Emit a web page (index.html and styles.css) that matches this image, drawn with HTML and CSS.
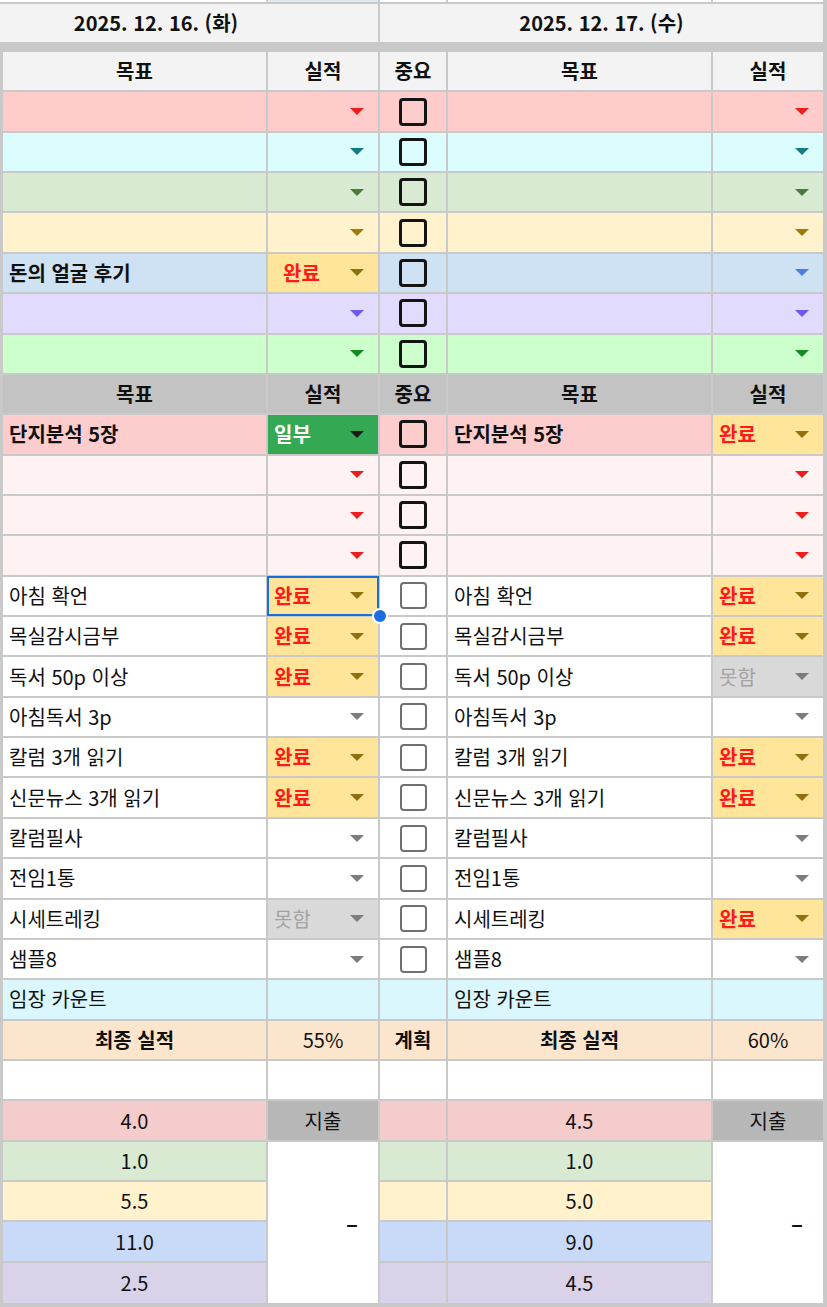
FILE: index.html
```html
<!DOCTYPE html>
<html lang="ko">
<head>
<meta charset="utf-8">
<title>Daily goals</title>
<link rel="stylesheet" href="styles.css">
</head>
<body>
<div class="sheet">
  <!-- partial top row -->
  <div class="c edge bg-w"></div><div class="c bg-topb"></div><div class="c bg-w"></div><div class="c bg-w"></div><div class="c bg-w"></div>
  <!-- dates -->
  <div class="c edge ctr b bg-h s2 date1">2025. 12. 16. (화)</div>
  <div class="c ctr b bg-h s3">2025. 12. 17. (수)</div>
  <div class="spacer"></div>

  <!-- header -->
  <div class="c ctr b bg-h">목표</div><div class="c ctr b bg-h">실적</div><div class="c ctr b bg-h">중요</div><div class="c ctr b bg-h">목표</div><div class="c ctr b bg-h">실적</div>

  <div class="c bg-1"></div><div class="c dd bg-1"><i class="arr a-red"></i></div><div class="c ctr bg-1"><span class="box"></span></div><div class="c bg-1"></div><div class="c dd bg-1"><i class="arr a-red"></i></div>
  <div class="c bg-2"></div><div class="c dd bg-2"><i class="arr a-teal"></i></div><div class="c ctr bg-2"><span class="box"></span></div><div class="c bg-2"></div><div class="c dd bg-2"><i class="arr a-teal"></i></div>
  <div class="c bg-3"></div><div class="c dd bg-3"><i class="arr a-dgreen"></i></div><div class="c ctr bg-3"><span class="box"></span></div><div class="c bg-3"></div><div class="c dd bg-3"><i class="arr a-dgreen"></i></div>
  <div class="c bg-4"></div><div class="c dd bg-4"><i class="arr a-gold"></i></div><div class="c ctr bg-4"><span class="box"></span></div><div class="c bg-4"></div><div class="c dd bg-4"><i class="arr a-gold"></i></div>
  <div class="c b bg-5">돈의 얼굴 후기</div><div class="c dd st-done wide"><span>완료</span><i class="arr a-brown"></i></div><div class="c ctr bg-5"><span class="box"></span></div><div class="c bg-5"></div><div class="c dd bg-5"><i class="arr a-blue"></i></div>
  <div class="c bg-6"></div><div class="c dd bg-6"><i class="arr a-purple"></i></div><div class="c ctr bg-6"><span class="box"></span></div><div class="c bg-6"></div><div class="c dd bg-6"><i class="arr a-purple"></i></div>
  <div class="c bg-7"></div><div class="c dd bg-7"><i class="arr a-green"></i></div><div class="c ctr bg-7"><span class="box"></span></div><div class="c bg-7"></div><div class="c dd bg-7"><i class="arr a-green"></i></div>

  <!-- header 2 -->
  <div class="c ctr b bg-h2">목표</div><div class="c ctr b bg-h2">실적</div><div class="c ctr b bg-h2">중요</div><div class="c ctr b bg-h2">목표</div><div class="c ctr b bg-h2">실적</div>

  <div class="c b bg-p">단지분석 5장</div><div class="c dd st-part"><span>일부</span><i class="arr a-black"></i></div><div class="c ctr bg-p"><span class="box"></span></div><div class="c b bg-p">단지분석 5장</div><div class="c dd st-done"><span>완료</span><i class="arr a-brown"></i></div>
  <div class="c bg-lp"></div><div class="c dd bg-lp"><i class="arr a-red"></i></div><div class="c ctr bg-lp"><span class="box"></span></div><div class="c bg-lp"></div><div class="c dd bg-lp"><i class="arr a-red"></i></div>
  <div class="c bg-lp"></div><div class="c dd bg-lp"><i class="arr a-red"></i></div><div class="c ctr bg-lp"><span class="box"></span></div><div class="c bg-lp"></div><div class="c dd bg-lp"><i class="arr a-red"></i></div>
  <div class="c bg-lp"></div><div class="c dd bg-lp"><i class="arr a-red"></i></div><div class="c ctr bg-lp"><span class="box"></span></div><div class="c bg-lp"></div><div class="c dd bg-lp"><i class="arr a-red"></i></div>

  <div class="c bg-w">아침 확언</div><div class="c dd st-done sel"><span>완료</span><i class="arr a-brown"></i><span class="handle"></span></div><div class="c ctr bg-w"><span class="box g"></span></div><div class="c bg-w">아침 확언</div><div class="c dd st-done"><span>완료</span><i class="arr a-brown"></i></div>
  <div class="c bg-w">목실감시금부</div><div class="c dd st-done"><span>완료</span><i class="arr a-brown"></i></div><div class="c ctr bg-w"><span class="box g"></span></div><div class="c bg-w">목실감시금부</div><div class="c dd st-done"><span>완료</span><i class="arr a-brown"></i></div>
  <div class="c bg-w">독서 50p 이상</div><div class="c dd st-done"><span>완료</span><i class="arr a-brown"></i></div><div class="c ctr bg-w"><span class="box g"></span></div><div class="c bg-w">독서 50p 이상</div><div class="c dd st-no"><span>못함</span><i class="arr a-gray"></i></div>
  <div class="c bg-w">아침독서 3p</div><div class="c dd bg-w"><i class="arr a-gray"></i></div><div class="c ctr bg-w"><span class="box g"></span></div><div class="c bg-w">아침독서 3p</div><div class="c dd bg-w"><i class="arr a-gray"></i></div>
  <div class="c bg-w">칼럼 3개 읽기</div><div class="c dd st-done"><span>완료</span><i class="arr a-brown"></i></div><div class="c ctr bg-w"><span class="box g"></span></div><div class="c bg-w">칼럼 3개 읽기</div><div class="c dd st-done"><span>완료</span><i class="arr a-brown"></i></div>
  <div class="c bg-w">신문뉴스 3개 읽기</div><div class="c dd st-done"><span>완료</span><i class="arr a-brown"></i></div><div class="c ctr bg-w"><span class="box g"></span></div><div class="c bg-w">신문뉴스 3개 읽기</div><div class="c dd st-done"><span>완료</span><i class="arr a-brown"></i></div>
  <div class="c bg-w">칼럼필사</div><div class="c dd bg-w"><i class="arr a-gray"></i></div><div class="c ctr bg-w"><span class="box g"></span></div><div class="c bg-w">칼럼필사</div><div class="c dd bg-w"><i class="arr a-gray"></i></div>
  <div class="c bg-w">전임1통</div><div class="c dd bg-w"><i class="arr a-gray"></i></div><div class="c ctr bg-w"><span class="box g"></span></div><div class="c bg-w">전임1통</div><div class="c dd bg-w"><i class="arr a-gray"></i></div>
  <div class="c bg-w">시세트레킹</div><div class="c dd st-no"><span>못함</span><i class="arr a-gray"></i></div><div class="c ctr bg-w"><span class="box g"></span></div><div class="c bg-w">시세트레킹</div><div class="c dd st-done"><span>완료</span><i class="arr a-brown"></i></div>
  <div class="c bg-w">샘플8</div><div class="c dd bg-w"><i class="arr a-gray"></i></div><div class="c ctr bg-w"><span class="box g"></span></div><div class="c bg-w">샘플8</div><div class="c dd bg-w"><i class="arr a-gray"></i></div>

  <div class="c bg-cy">임장 카운트</div><div class="c bg-cy"></div><div class="c bg-cy"></div><div class="c bg-cy">임장 카운트</div><div class="c bg-cy"></div>
  <div class="c ctr b bg-pe">최종 실적</div><div class="c ctr bg-pe">55%</div><div class="c ctr b bg-pe">계획</div><div class="c ctr b bg-pe">최종 실적</div><div class="c ctr bg-pe">60%</div>
  <div class="c bg-w"></div><div class="c bg-w"></div><div class="c bg-w"></div><div class="c bg-w"></div><div class="c bg-w"></div>

  <div class="c ctr bg-e1">4.0</div><div class="c ctr bg-ex">지출</div><div class="c bg-e1"></div><div class="c ctr bg-e1">4.5</div><div class="c ctr bg-ex">지출</div>
  <div class="c ctr bg-e2">1.0</div><div class="c dash bg-w r4">–</div><div class="c bg-e2"></div><div class="c ctr bg-e2">1.0</div><div class="c dash bg-w r4">–</div>
  <div class="c ctr bg-e3">5.5</div><div class="c bg-e3"></div><div class="c ctr bg-e3">5.0</div>
  <div class="c ctr bg-e4">11.0</div><div class="c bg-e4"></div><div class="c ctr bg-e4">9.0</div>
  <div class="c ctr bg-e5">2.5</div><div class="c bg-e5"></div><div class="c ctr bg-e5">4.5</div>
</div>
</body>
</html>
```
FILE: styles.css
```css
html, body {
  margin: 0;
  padding: 0;
  background: #c9c9c9;
}
body {
  width: 827px;
  height: 1307px;
  overflow: hidden;
  font-family: "Noto Sans CJK KR", "Noto Sans", sans-serif;
  color: #111;
}
.sheet {
  display: grid;
  grid-template-columns: 263px 110px 66px 263px 110px;
  grid-template-rows: 2px 38px 6px repeat(30, 38.37px) 40px;
  column-gap: 2px;
  row-gap: 2px;
  padding-left: 3px;
  background: #c9c9c9;
}
.c {
  display: flex;
  align-items: center;
  padding: 0 6px;
  font-size: 20px;
  line-height: 1;
  white-space: nowrap;
  overflow: hidden;
  min-width: 0;
  position: relative;
}
.edge { margin-left: -3px; }
.ctr { justify-content: center; }
.b { font-weight: 700; }
.s2 { grid-column: span 2; }
.s3 { grid-column: span 3; }
.r4 { grid-row: span 4; }
.spacer { grid-column: span 5; }
.date1 { padding-right: 72px; }

.dd { padding-right: 14px; }
.dd .arr { margin-left: auto; }
.wide { padding-left: 15px; }
.arr {
  display: block;
  width: 0;
  height: 0;
  border-left: 7px solid transparent;
  border-right: 7px solid transparent;
  border-top: 7px solid #808080;
}
.a-red { border-top-color: #f01c1c; }
.a-teal { border-top-color: #127c80; }
.a-dgreen { border-top-color: #4b7a3c; }
.a-gold { border-top-color: #9e7a0c; }
.a-blue { border-top-color: #4a7fe0; }
.a-purple { border-top-color: #6d58f2; }
.a-green { border-top-color: #128c20; }
.a-brown { border-top-color: #8e700e; }
.a-black { border-top-color: #1a1a1a; }
.a-gray { border-top-color: #7c7c7c; }

.box {
  display: block;
  width: 22px;
  height: 22px;
  border: 3px solid #141414;
  border-radius: 4px;
  box-sizing: content-box;
}
.box.g {
  border-color: #707070;
  width: 23px;
  height: 23px;
  border-width: 2.5px;
}

.st-done { background: #ffe599; color: #ff1a1a; font-weight: 700; }
.st-part { background: #34a853; color: #fff; font-weight: 700; }
.st-no { background: #d9d9d9; color: #a3a3a3; }

.sel {
  overflow: visible;
  box-shadow: 0 0 0 1px #1a6fe0, inset 0 0 0 1px #1a6fe0;
}
.handle {
  position: absolute;
  right: -10px;
  bottom: -9px;
  width: 12px;
  height: 12px;
  border-radius: 50%;
  background: #1a6fe0;
  border: 2px solid #fff;
  z-index: 2;
}

.dash {
  justify-content: flex-end;
  padding-right: 20px;
  font-weight: 700;
  font-size: 22px;
}

.bg-w { background: #ffffff; }
.bg-topb { background: #dde8f5; }
.bg-h { background: #f3f3f3; }
.bg-h2 { background: #c3c3c3; }
.bg-1 { background: #ffcccc; }
.bg-2 { background: #dcfdfe; }
.bg-3 { background: #d9ead3; }
.bg-4 { background: #fff2cc; }
.bg-5 { background: #cfe2f3; }
.bg-6 { background: #e1dbfd; }
.bg-7 { background: #ccffcc; }
.bg-p { background: #fdcccc; }
.bg-lp { background: #fff2f2; }
.bg-cy { background: #daf7fd; }
.bg-pe { background: #fce5cd; }
.bg-e1 { background: #f4cccc; }
.bg-e2 { background: #d9ead3; }
.bg-e3 { background: #fff2cc; }
.bg-e4 { background: #c9daf8; }
.bg-e5 { background: #d9d2e9; }
.bg-ex { background: #b7b7b7; }
```
